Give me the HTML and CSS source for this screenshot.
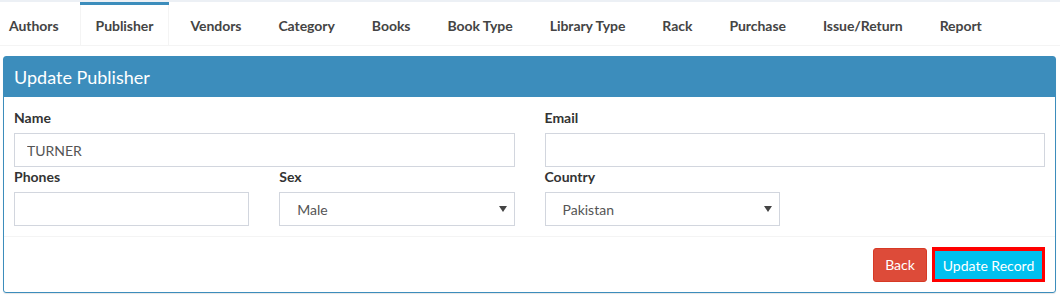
FILE: index.html
```html
<!DOCTYPE html>
<html lang="en">
<head>
  <meta charset="UTF-8" />
  <title>Update Publisher</title>
  <link rel="stylesheet" href="styles.css">
</head>
<body>
  <div class="page">
    <ul class="tabs">
      <li><a href="#">Authors</a></li>
      <li class="active"><a href="#">Publisher</a></li>
      <li><a href="#">Vendors</a></li>
      <li><a href="#">Category</a></li>
      <li><a href="#">Books</a></li>
      <li><a href="#">Book Type</a></li>
      <li><a href="#">Library Type</a></li>
      <li><a href="#">Rack</a></li>
      <li><a href="#">Purchase</a></li>
      <li><a href="#">Issue/Return</a></li>
      <li><a href="#">Report</a></li>
    </ul>
    <div class="tab-content">
      <div class="box">
        <div class="box-header">
          <h3>Update Publisher</h3>
        </div>
        <form class="box-body">
          <div class="row">
            <div class="col-6">
              <label for="name">Name</label>
              <input type="text" id="name" value="TURNER" />
            </div>
            <div class="col-6">
              <label for="email">Email</label>
              <input type="email" id="email" />
            </div>
          </div>
          <div class="row">
            <div class="col-3">
              <label for="phones">Phones</label>
              <input type="text" id="phones" />
            </div>
            <div class="col-3">
              <label for="sex">Sex</label>
              <div class="select-wrap">
                <select id="sex">
                  <option>Male</option>
                  <option>Female</option>
                </select>
              </div>
            </div>
            <div class="col-3">
              <label for="country">Country</label>
              <div class="select-wrap">
                <select id="country">
                  <option>Pakistan</option>
                </select>
              </div>
            </div>
          </div>
        </form>
        <div class="box-footer">
          <button class="btn btn-back">Back</button>
          <button class="btn btn-update">Update Record</button>
        </div>
      </div>
    </div>
  </div>
</body>
</html>
```
FILE: styles.css
```css
body {
  margin: 0;
  font-family: Lato, "Noto Sans", sans-serif;
  font-size: 14px;
  line-height: 20px;
  color: #333;
  background: #ecf0f5;
}
.page {
  margin-top: 2px;
  min-height: 293px;
  background: #fff;
  overflow: hidden;
}
.tabs {
  display: flex;
  list-style: none;
  margin: 0 0 0 -7px;
  padding: 0;
  border-bottom: 1px solid #f4f4f4;
}
.tabs li {
  margin-right: 5px;
  border-top: 3px solid transparent;
}
.tabs a {
  display: block;
  padding: 11px 15px 9px;
  border-left: 1px solid transparent;
  border-right: 1px solid transparent;
  color: #444;
  font-weight: 700;
  letter-spacing: -0.05px;
  text-decoration: none;
}
.tabs li.active {
  border-top-color: #3c8dbc;
}
.tabs li.active a {
  border-left-color: #f4f4f4;
  border-right-color: #f4f4f4;
}
.tab-content {
  padding: 10px 4px 0 3px;
}
.box {
  border: 1px solid #3c8dbc;
  border-radius: 3px;
  box-shadow: 0 1px 1px rgba(0,0,0,0.1);
}
.box-header {
  background: #3c8dbc;
  padding: 10px;
}
.box-header h3 {
  margin: 0;
  font-size: 18px;
  line-height: 20px;
  font-weight: 400;
  color: #fff;
}
.box-body {
  margin: 0;
  padding: 11px 10px 10px;
}
.row {
  display: flex;
  margin: 0 -15px;
}
.col-6 {
  width: 50%;
  padding: 0 15px;
  box-sizing: border-box;
}
.col-3 {
  width: 25%;
  padding: 0 15px;
  box-sizing: border-box;
}
label {
  display: block;
  margin-bottom: 5px;
  font-weight: 700;
}
input,
select {
  display: block;
  width: 100%;
  height: 34px;
  box-sizing: border-box;
  padding: 6px 12px;
  border: 1px solid #d2d6de;
  border-radius: 0;
  background: #fff;
  font-family: inherit;
  font-size: 14px;
  color: #555;
  outline: none;
}
select {
  appearance: none;
  -webkit-appearance: none;
  padding-left: 17px;
}
.select-wrap {
  position: relative;
}
.select-wrap::after {
  content: "";
  position: absolute;
  right: 8px;
  top: 14px;
  border-left: 4px solid transparent;
  border-right: 4px solid transparent;
  border-top: 6px solid #444;
}
.box-footer {
  display: flex;
  justify-content: flex-end;
  align-items: center;
  gap: 5px;
  padding: 10px;
  border-top: 1px solid #f4f4f4;
}
.btn {
  height: 34px;
  padding: 6px 12px;
  border: 1px solid transparent;
  border-radius: 3px;
  font-family: inherit;
  font-size: 14px;
  color: #fff;
  cursor: pointer;
}
.btn-back {
  width: 54px;
  padding: 6px 0;
  background: #dd4b39;
  border-color: #d73925;
}
.btn-update {
  width: 113px;
  height: 35px;
  padding: 3px 0;
  background: #00c0ef;
  border: 3px solid #ff0000;
  border-top-width: 4px;
  border-radius: 0;
}
```
